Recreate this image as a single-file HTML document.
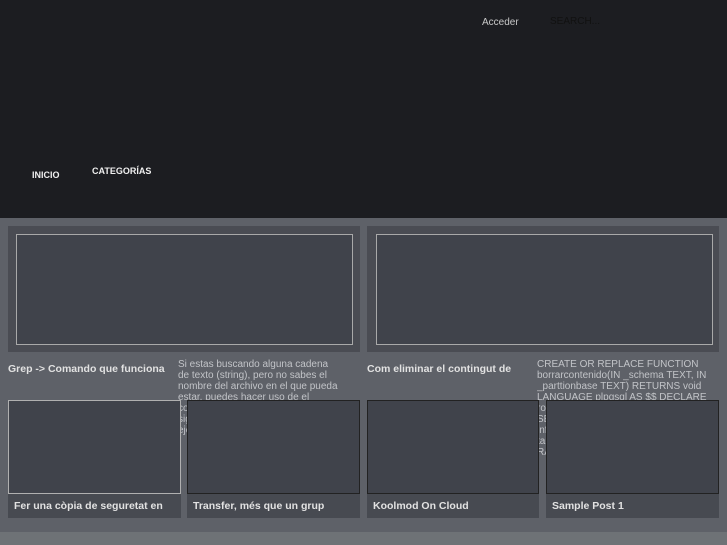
<!DOCTYPE html>
<html><head><meta charset="utf-8"><style>
*{margin:0;padding:0;box-sizing:border-box}
body{width:727px;height:545px;overflow:hidden;background:#5e6168;font-family:"Liberation Sans",sans-serif;position:relative}
.hdr{position:absolute;left:0;top:0;width:727px;height:218px;background:#1c1d21}
.a{position:absolute;color:#c8c8c8;font-size:10px}
.nav{position:absolute;color:#f0f0f0;font-size:9px;font-weight:bold}
.panel{position:absolute;background:#4a4c53}
.inner{position:absolute;background:#40434b;border:1px solid #a9a9a9}
.t{position:absolute;color:#e2e2e2;font-size:10.5px;font-weight:bold;white-space:nowrap}
.ex{position:absolute;color:#c2c4c8;font-size:10px;line-height:11px;overflow:hidden}
.card{position:absolute;background:#474a51}
.img{position:absolute;left:0;top:0;right:0;height:94px;background:#40434b;border:1px solid #222}
.cap{position:absolute;left:6px;top:100px;color:#e2e2e2;font-size:10.5px;font-weight:bold;white-space:nowrap}
.foot{position:absolute;left:0;top:532px;width:727px;height:13px;background:#6e7276}
</style></head><body>
<div class="hdr"></div>
<div class="a" style="left:482px;top:17px">Acceder</div>
<div class="a" style="left:550px;top:16px;color:#111">SEARCH...</div>
<div class="nav" style="left:32px;top:170px">INICIO</div>
<div class="nav" style="left:92px;top:166px">CATEGORÍAS</div>

<div class="panel" style="left:8px;top:226px;width:352px;height:126px"></div>
<div class="inner" style="left:16px;top:234px;width:337px;height:111px"></div>
<div class="panel" style="left:367px;top:226px;width:352px;height:126px"></div>
<div class="inner" style="left:376px;top:234px;width:337px;height:111px"></div>

<div class="t" style="left:8px;top:363px">Grep -&gt; Comando que funciona</div>
<div class="ex" style="left:178px;top:359px;width:162px;height:108px">Si estas buscando alguna cadena de texto (string), pero no sabes el nombre del archivo en el que pueda estar, puedes hacer uso de el comando grep para buscarlo. Es el siguiente comando de texto que se ejecuta en el directorio de</div>
<div class="t" style="left:367px;top:363px">Com eliminar el contingut de</div>
<div class="ex" style="left:537px;top:359px;width:175px;height:150px;font-size:10px">CREATE OR REPLACE FUNCTION borrarcontenido(IN _schema TEXT, IN _parttionbase TEXT) RETURNS void LANGUAGE plpgsql AS $$ DECLARE row record; BEGIN FOR row IN SELECT table_name FROM information_schema.tables WHERE table_schema LIKE _schema AND RAISE</div>

<div class="card" style="left:8px;top:400px;width:173px;height:118px"><div class="img" style="border-color:#b0b0b0"></div><div class="cap">Fer una còpia de seguretat en</div></div>
<div class="card" style="left:187px;top:400px;width:173px;height:118px"><div class="img"></div><div class="cap">Transfer, més que un grup</div></div>
<div class="card" style="left:367px;top:400px;width:172px;height:118px"><div class="img"></div><div class="cap">Koolmod On Cloud</div></div>
<div class="card" style="left:546px;top:400px;width:173px;height:118px"><div class="img"></div><div class="cap">Sample Post 1</div></div>
<div class="foot"></div>
</body></html>
